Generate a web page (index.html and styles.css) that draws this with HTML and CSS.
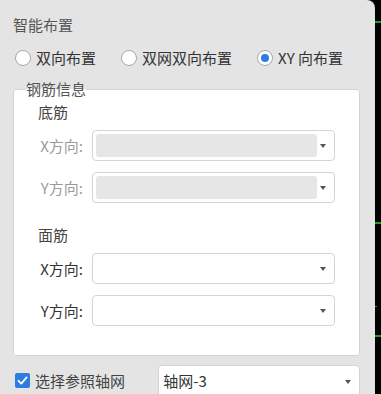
FILE: index.html
```html
<!DOCTYPE html>
<html lang="zh">
<head>
  <meta charset="UTF-8" />
  <title>智能布置</title>
  <link rel="stylesheet" href="styles.css">
</head>
<body>
  <!-- 对话框 -->
  <div class="panel">
    <div class="title">智能布置</div>

    <div class="radio-row">
      <label class="radio"><span class="dot"></span>双向布置</label>
      <label class="radio"><span class="dot"></span>双网双向布置</label>
      <label class="radio"><span class="dot on"></span>XY 向布置</label>
    </div>

    <fieldset class="group">
      <legend>钢筋信息</legend>

      <div class="sub">底筋</div>
      <div class="row disabled">
        <span class="lbl">X方向:</span>
        <div class="select"><div class="fill"></div><span class="arrow"></span></div>
      </div>
      <div class="row disabled">
        <span class="lbl">Y方向:</span>
        <div class="select"><div class="fill"></div><span class="arrow"></span></div>
      </div>

      <div class="sub sub-top">面筋</div>
      <div class="row">
        <span class="lbl">X方向:</span>
        <div class="select"><span class="arrow"></span></div>
      </div>
      <div class="row">
        <span class="lbl">Y方向:</span>
        <div class="select"><span class="arrow"></span></div>
      </div>
    </fieldset>

    <div class="bottom">
      <label class="check-item">
        <span class="check">
          <svg width="15" height="15" viewBox="0 0 15 15"><path d="M3.5 7.8 L6.3 10.6 L11.6 4.4" fill="none" stroke="#fff" stroke-width="1.8" stroke-linecap="round" stroke-linejoin="round"/></svg>
        </span>
        选择参照轴网
      </label>
      <div class="select grid-select"><span class="value">轴网-3</span><span class="arrow"></span></div>
    </div>
  </div>

  <!-- 背景里的其他窗口 -->
  <div class="strip"></div>
</body>
</html>
```

FILE: styles.css
```css
body {
  margin: 0;
  background: #000;
  display: flex;
  height: 394px;
  overflow: hidden;
  font-family: "Noto Sans CJK SC", "Noto Sans", sans-serif;
  font-size: 15px;
  color: #333;
}

.panel {
  width: 375px;
  height: 394px;
  box-sizing: border-box;
  background: #e4e4e4;
  border-top-right-radius: 8px;
  padding: 15px 15px 0 13px;
}

.title {
  line-height: 20px;
  color: #555;
}

/* 单选 */
.radio-row {
  display: flex;
  gap: 25px;
  margin-top: 13px;
  padding-left: 2px;
  line-height: 20px;
}

.radio {
  display: flex;
  align-items: center;
}

.dot {
  width: 14px;
  height: 14px;
  border: 1px solid #a8a8a8;
  border-radius: 50%;
  background: #fff;
  margin-right: 5px;
  display: flex;
  align-items: center;
  justify-content: center;
}

.dot.on::after {
  content: "";
  width: 8px;
  height: 8px;
  border-radius: 50%;
  background: #2b7de1;
}

/* 钢筋信息 */
.group {
  margin: 11px 0 0 0;
  width: 347px;
  box-sizing: border-box;
  height: 277px;
  border: 1px solid #d2d2d2;
  border-radius: 3px;
  background: #fff;
  padding: 3px 0 0 24px;
}

.group legend {
  padding: 0;
  margin-left: -12px;
  line-height: 20px;
  color: #555;
}

.sub {
  line-height: 20px;
  color: #444;
}

.sub-top {
  margin-top: 22px;
}

.row {
  display: flex;
  align-items: center;
  margin-top: 8px;
}

.row + .row {
  margin-top: 11px;
}

.lbl {
  width: 53px;
  padding-right: 8px;
  text-align: right;
  box-sizing: border-box;
}

.row.disabled .lbl {
  color: #9a9a9a;
}

.select {
  position: relative;
  width: 243px;
  height: 31px;
  box-sizing: border-box;
  border: 1px solid #d4d4d4;
  border-radius: 4px;
  background: #fff;
}

.row .select {
  margin-left: 1px;
}

.fill {
  position: absolute;
  left: 3px;
  top: 3px;
  bottom: 3px;
  right: 17px;
  background: #e6e6e6;
  border-radius: 3px;
}

.arrow {
  position: absolute;
  right: 8px;
  top: 13px;
  width: 0;
  height: 0;
  border-left: 3px solid transparent;
  border-right: 3px solid transparent;
  border-top: 4px solid #555;
}

/* 底部 */
.bottom {
  display: flex;
  align-items: center;
  margin-top: 9px;
}

.check-item {
  display: flex;
  align-items: center;
  width: 144px;
  padding-left: 2px;
  margin-top: -2px;
  color: #444;
}

.check {
  width: 15px;
  height: 15px;
  border-radius: 2px;
  background: #2b7de1;
  margin-right: 5px;
  display: flex;
}

.grid-select {
  width: 203px;
  height: 32px;
}

.value {
  position: absolute;
  left: 4px;
  top: 5px;
  line-height: 20px;
  color: #333;
}

.grid-select .arrow {
  top: 14px;
}

/* 右侧黑色背景 */
.strip {
  flex: 1;
  background-color: #000;
  background-image:
    linear-gradient(#1f9c24, #1f9c24),
    linear-gradient(#1f9c24, #1f9c24),
    linear-gradient(#1f9c24, #1f9c24),
    linear-gradient(#1f9c24, #1f9c24);
  background-repeat: no-repeat;
  background-size: 100% 2px, 100% 2px, 2px 1px, 100% 2px;
  background-position: 0 21px, 0 222px, 0 306px, 0 335px;
}
```
